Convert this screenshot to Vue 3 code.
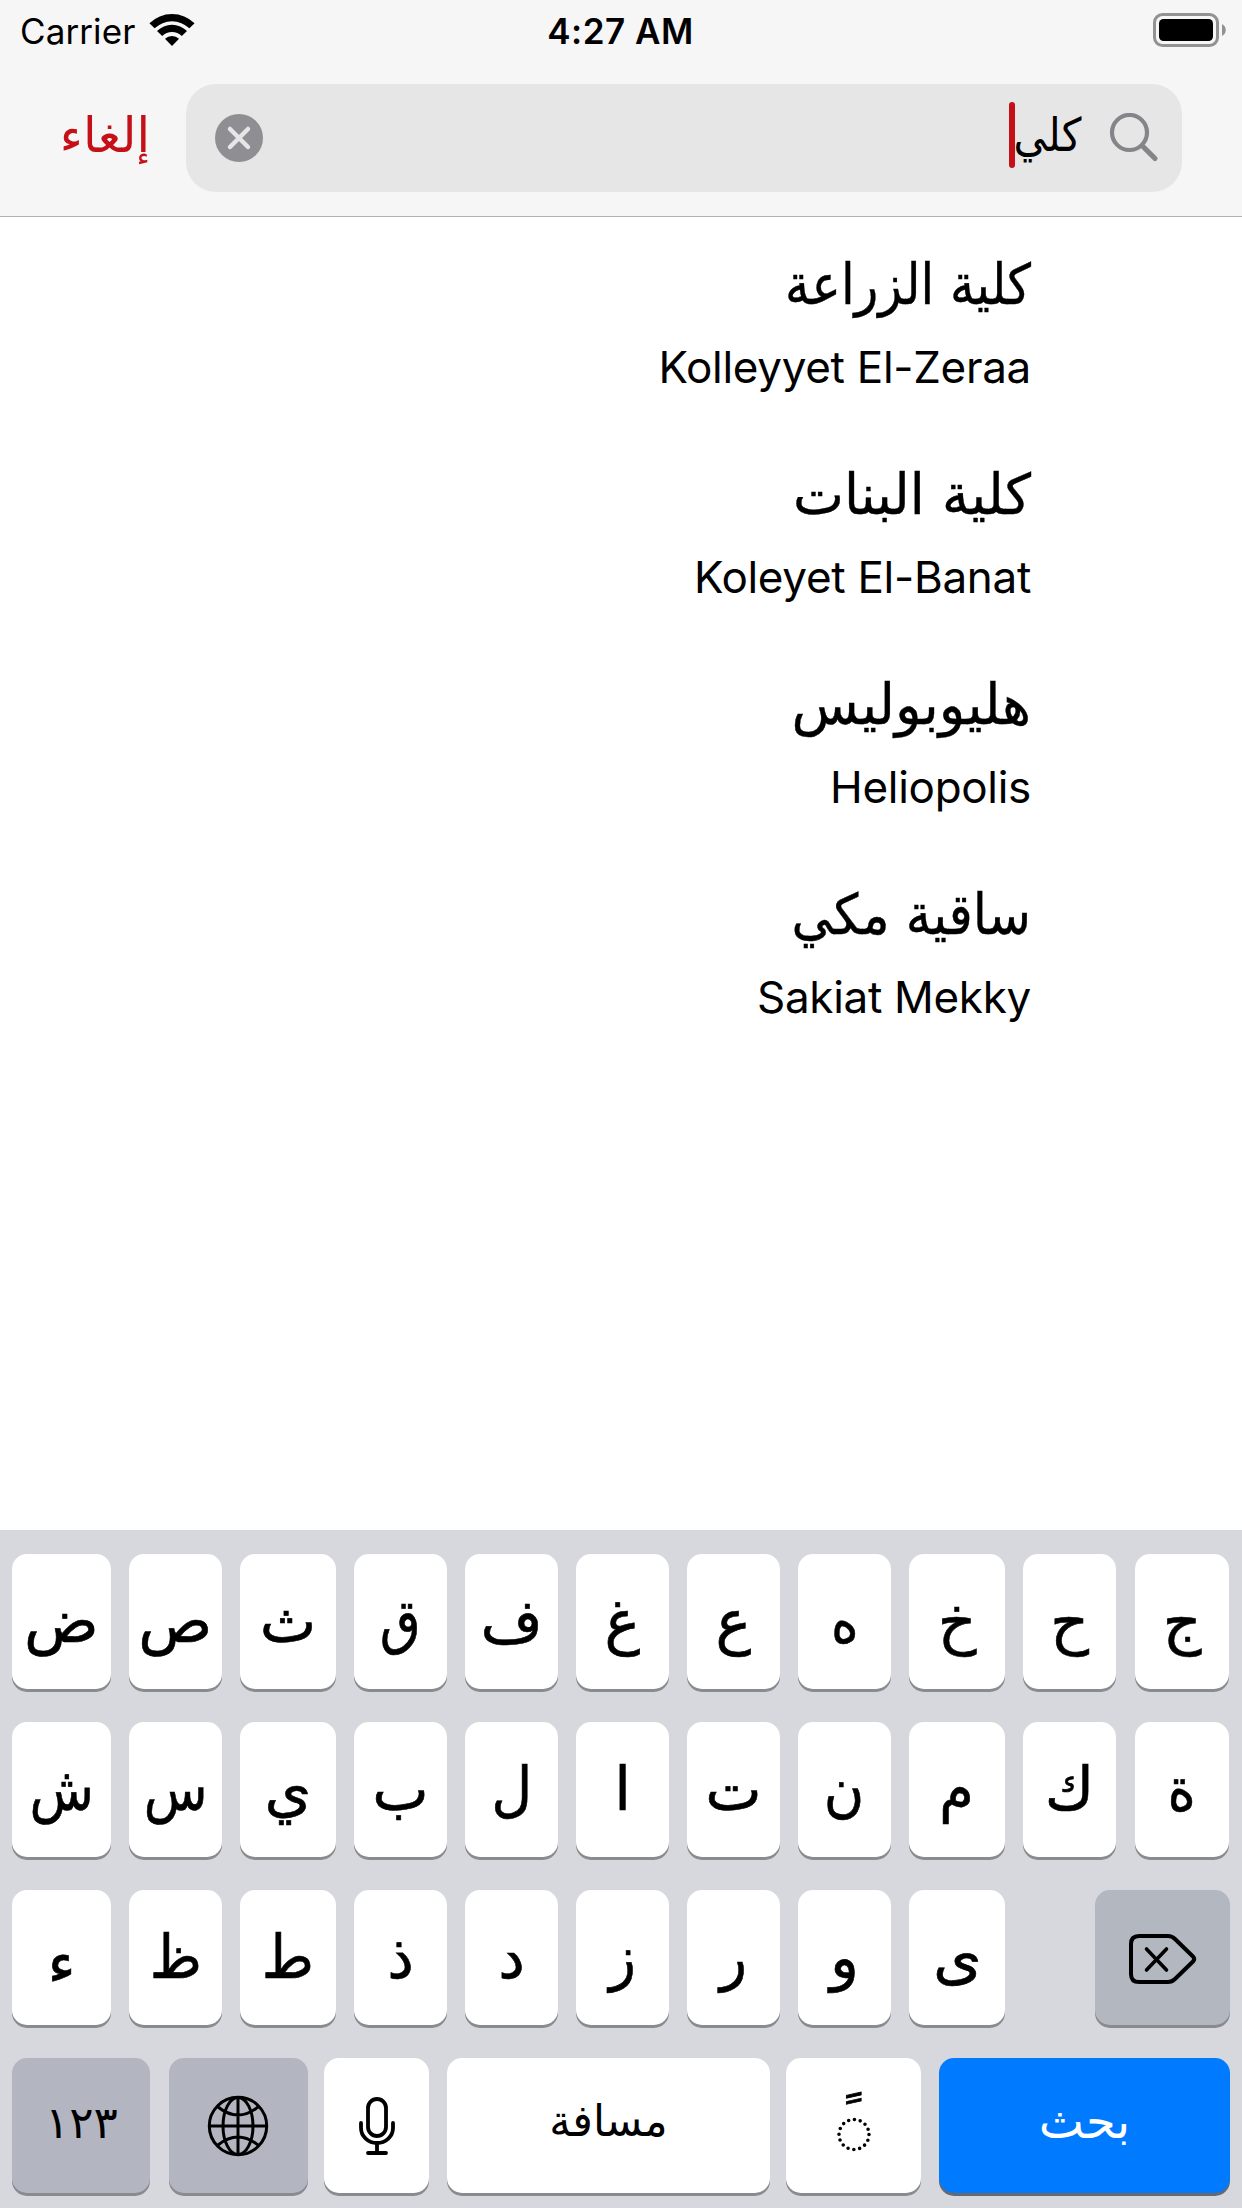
<script setup>
// `fit` is the horizontal condensing of each Arabic name
const results = [
  { ar: 'كلية الزراعة', en: 'Kolleyyet El-Zeraa', fit: 0.88 },
  { ar: 'كلية البنات', en: 'Koleyet El-Banat', fit: 0.967 },
  { ar: 'هليوبوليس', en: 'Heliopolis', fit: 0.982 },
  { ar: 'ساقية مكي', en: 'Sakiat Mekky', fit: 0.91 },
]

const rows = [
  ['ض', 'ص', 'ث', 'ق', 'ف', 'غ', 'ع', 'ه', 'خ', 'ح', 'ج'],
  ['ش', 'س', 'ي', 'ب', 'ل', 'ا', 'ت', 'ن', 'م', 'ك', 'ة'],
  ['ء', 'ظ', 'ط', 'ذ', 'د', 'ز', 'ر', 'و', 'ى'],
]

const condensed = {
  ش: 0.88, س: 0.87, ق: 0.88, ن: 0.92, ظ: 0.94, ط: 0.94, ه: 0.88, ة: 0.9,
  ز: 0.92, ر: 0.93, ل: 0.94, م: 0.93, ض: 1.03, ص: 1.02, ى: 1.04,
}
</script>

<template>
  <div class="screen">
    <header class="top">
      <div class="status">
        <div class="carrier">
          <span>Carrier</span>
          <svg class="wifi" width="46" height="34" viewBox="0 0 46 34">
            <path d="M0.4 10.2A32.5 32.5 0 0 1 45.6 10.2L40.4 15.3A25.2 25.2 0 0 0 5.6 15.3Z" />
            <path d="M8 17.9A21.5 21.5 0 0 1 38 17.9L32.8 23A14.2 14.2 0 0 0 13.2 23Z" />
            <path d="M16 25.7A10.3 10.3 0 0 1 30 25.7L23 33Z" />
          </svg>
        </div>
        <span class="time">4:27 AM</span>
        <svg class="battery" width="74" height="34" viewBox="0 0 74 34">
          <rect x="1.5" y="1.5" width="63" height="31" rx="8" fill="none" stroke="#929293" stroke-width="3" />
          <rect x="6" y="6" width="54" height="22" rx="4.5" />
          <path d="M69 11C74 13.500 74 20.500 69 23Z" fill="#929293" />
        </svg>
      </div>
      <div class="search-row">
        <span class="cancel ar">إلغاء</span>
        <div class="field">
          <svg width="48" height="48" viewBox="0 0 48 48">
            <circle cx="24" cy="24" r="24" fill="#8e8e93" />
            <path d="M15 15L33 33M33 15L15 33" stroke="#e6e6e7" stroke-width="4.500" stroke-linecap="round" />
          </svg>
          <div class="query">
            <span class="caret"></span>
            <span class="typed ar">كلي</span>
          </div>
          <svg class="glass" width="50" height="50" viewBox="0 0 50 50" fill="none" stroke="#858589" stroke-linecap="round">
            <circle cx="20.500" cy="19.500" r="17.500" stroke-width="4.200" />
            <path d="M33.500 33L46 45.500" stroke-width="5.200" />
          </svg>
        </div>
      </div>
    </header>

    <main class="results">
      <div v-for="r in results" :key="r.en" class="result">
        <div class="name ar" :style="{ transform: `scaleX(${r.fit})` }">{{ r.ar }}</div>
        <div class="latin">{{ r.en }}</div>
      </div>
    </main>

    <section class="keyboard">
      <div v-for="(row, i) in rows" :key="i" class="row letters">
        <div v-for="k in row" :key="k" class="key">
          <span class="glyph ar" :class="{ hamza: k === 'ء' }" :style="{ scale: `${condensed[k] || 1} 1` }">{{ k }}</span>
        </div>
        <div v-if="i === 2" class="key dark delete">
          <svg width="70" height="52" viewBox="0 0 70 52" fill="none" stroke="#000" stroke-linecap="round" stroke-linejoin="round">
            <path d="M11 3H40Q44 3 47 6L65 23.500Q67.500 26 65 28.500L47 46Q44 49 40 49H11Q3 49 3 41V11Q3 3 11 3Z" stroke-width="4" />
            <path d="M18.500 16L38.500 37M38.500 16L18.500 37" stroke-width="3.600" />
          </svg>
        </div>
      </div>
      <div class="row bottom">
        <div class="key dark numbers"><span class="label ar digits">١٢٣</span></div>
        <div class="key dark globe">
          <svg width="62" height="62" viewBox="0 0 62 62" fill="none" stroke="#000" stroke-width="3">
            <circle cx="31" cy="31" r="28.700" />
            <ellipse cx="31" cy="31" rx="15" ry="28.500" />
            <path d="M31 2.500V59.500M2.500 31H59.500M11 12Q31 28 51 12M11 50Q31 34 51 50" />
          </svg>
        </div>
        <div class="key mic">
          <svg width="36" height="58" viewBox="0 0 36 58" fill="none" stroke="#000" stroke-width="3.800" stroke-linecap="round">
            <rect x="9" y="2" width="18" height="37" rx="9" />
            <path d="M2 26V31A16 15 0 0 0 34 31V26M18 47V56M9 56H27" />
          </svg>
        </div>
        <div class="key spacebar"><span class="label ar space">مسافة</span></div>
        <div class="key marks">
          <svg class="diacritic" width="60" height="110" viewBox="0 0 60 110">
            <text class="tanween" x="25" y="64" text-anchor="middle">&nbsp;ً</text>
            <circle cx="30" cy="63.500" r="15" fill="none" stroke="#000" stroke-width="3.600" stroke-linecap="round" stroke-dasharray="0 5.8905" />
          </svg>
        </div>
        <div class="key blue go"><span class="label ar search">بحث</span></div>
      </div>
    </section>
  </div>
</template>

<style>
body {
  margin: 0;
}
</style>

<style scoped>
.screen {
  width: 1242px;
  height: 2208px;
  display: flex;
  flex-direction: column;
  background: #fff;
  color: #000;
  font-family: Inter, "Liberation Sans", sans-serif;
  overflow: hidden;
}
.ar {
  font-family: "DejaVu Sans", sans-serif;
  direction: rtl;
  white-space: nowrap;
}
.top {
  box-sizing: border-box;
  height: 217px;
  background: #f6f6f6;
  border-bottom: 1px solid #b1b1b2;
}
.status {
  height: 60px;
  padding: 0 15px 0 20px;
  display: grid;
  grid-template-columns: 1fr auto 1fr;
  font-size: 35px;
  line-height: 62px;
}
.carrier {
  display: flex;
  gap: 14px;
  letter-spacing: 0.1px;
}
.wifi {
  margin-top: 13px;
}
.time {
  font-weight: 600;
  letter-spacing: 0.5px;
  transform: translateX(-3px);
}
.battery {
  justify-self: end;
  margin-top: 13px;
}
.search-row {
  display: flex;
  align-items: center;
  margin-top: 24px;
  height: 108px;
}
.cancel {
  width: 150px;
  height: 108px;
  margin-right: 36px;
  color: #c41016;
  font-size: 49px;
  line-height: 103px;
}
.field {
  box-sizing: border-box;
  width: 996px;
  height: 108px;
  padding: 0 23px 0 29px;
  display: flex;
  align-items: center;
  background: #e6e6e7;
  border-radius: 30px;
}
.query {
  flex: 1;
  display: flex;
  justify-content: flex-end;
  align-items: center;
  margin: 0 28px 6px 0;
}
.caret {
  width: 6px;
  height: 66px;
  border-radius: 3px;
  background: #c41016;
}
.typed {
  font-size: 46px;
  line-height: 102px;
  transform: scaleX(0.9);
  transform-origin: right;
  margin-left: -9px;
}
.results {
  height: 1313px;
  width: 1031px;
}
.result {
  height: 210px;
  text-align: right;
}
.name {
  padding-top: 28px;
  height: 87px;
  line-height: 80px;
  font-size: 56px;
  transform-origin: right;
  -webkit-text-stroke: 0.4px currentColor;
}
.latin {
  font-size: 44px;
  line-height: 70px;
  letter-spacing: -0.3px;
}
.keyboard {
  box-sizing: border-box;
  height: 678px;
  padding: 24px 12px 0;
  background: #d7d8dd;
  display: flex;
  flex-direction: column;
  gap: 33px;
}
.row {
  height: 135px;
}
.letters {
  display: grid;
  grid-template-columns: 99px 93px 96px 93px 93px 93px 93px 93px 96px 93px 96px;
  column-gap: 18px;
}
.letters > .key:nth-child(11) {
  margin-left: 1px;
  width: 94px;
}
.bottom {
  display: flex;
}
.numbers {
  width: 138px;
  margin-right: 19px;
}
.globe {
  width: 139px;
  margin-right: 16px;
}
.globe svg {
  margin-right: 2px;
}
.mic {
  width: 105px;
  margin-right: 18px;
}
.spacebar {
  width: 323px;
  margin-right: 16px;
}
.marks {
  width: 135px;
  margin-right: 18px;
}
.go {
  width: 291px;
}
.key {
  display: flex;
  align-items: center;
  justify-content: center;
  border-radius: 15px;
  background: #fff;
  box-shadow: 0 3px 0 #898b8f;
}
.dark {
  background: #b3b6c1;
}
.blue {
  background: #007aff;
  color: #fff;
  box-shadow: 0 3px 0 #68696e;
}
.delete {
  grid-column: 10 / 12;
  justify-self: end;
  width: 135px;
  background: #b2b7c0;
}
.delete svg {
  margin-top: 3px;
}
.glyph {
  font-size: 60px;
  line-height: 135px;
  -webkit-text-stroke: 0.6px currentColor;
}
.hamza {
  transform: translateY(6px);
}
.label {
  font-size: 44px;
  line-height: 135px;
}
.digits {
  transform: translateY(-3px) scaleX(1.03);
}
.space {
  transform: translateY(-5px) scaleX(0.98);
}
.search {
  transform: translateY(-4px);
  font-size: 48px;
}
.diacritic {
  overflow: visible;
}
.tanween {
  font-family: "DejaVu Sans", sans-serif;
  font-size: 52px;
  stroke: #000;
  stroke-width: 0.8px;
}
</style>
